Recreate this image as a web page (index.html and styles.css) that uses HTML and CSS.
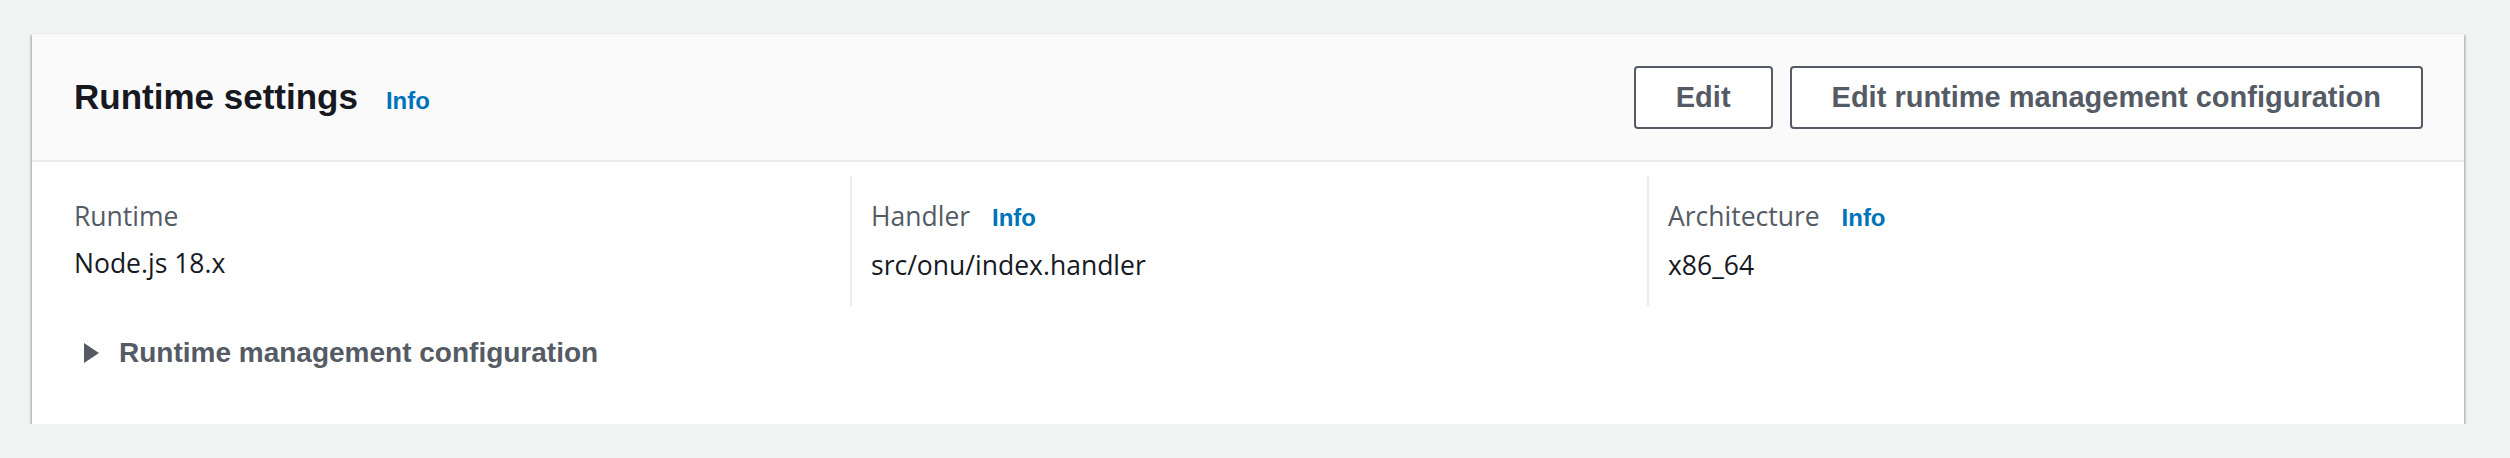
FILE: index.html
```html
<!DOCTYPE html>
<html lang="en">
<head>
<meta charset="utf-8">
<title>Runtime settings</title>
<link rel="stylesheet" href="styles.css">
</head>
<body>
<section class="card">
  <header class="card-header">
    <div class="title-group">
      <h2 class="title">Runtime settings</h2>
      <a class="info-link info-title" href="#">Info</a>
    </div>
    <div class="actions">
      <button class="btn btn-edit" type="button">Edit</button>
      <button class="btn" type="button">Edit runtime management configuration</button>
    </div>
  </header>
  <div class="card-body">
    <div class="columns">
      <div class="col">
        <div class="label">Runtime</div>
        <div class="value">Node.js 18.x</div>
      </div>
      <div class="col col-divided">
        <div class="label">Handler <a class="info-link" href="#">Info</a></div>
        <div class="value">src/onu/index.handler</div>
      </div>
      <div class="col col-divided">
        <div class="label">Architecture <a class="info-link" href="#">Info</a></div>
        <div class="value">x86_64</div>
      </div>
    </div>
    <div class="expander">
      <svg class="caret" width="15" height="20" viewBox="0 0 15 20" aria-hidden="true"><polygon points="0,0 15,10 0,20" fill="#545b64"/></svg>
      <span class="expander-text">Runtime management configuration</span>
    </div>
  </div>
</section>
</body>
</html>
```

FILE: styles.css
```css
* { box-sizing: border-box; }

html, body {
  margin: 0;
  background: #f2f3f3;
}

body {
  padding: 33px 46px 0 32px;
  font-family: "Open Sans", "Noto Sans", sans-serif;
  color: #16191f;
}

.card {
  background: #ffffff;
  box-shadow: 0 2px 2px 0 rgba(0, 28, 36, 0.35), 2px 2px 2px 0 rgba(0, 28, 36, 0.15), -2px 2px 2px 0 rgba(0, 28, 36, 0.15);
  border-top: 1px solid #eaeded;
}

.card-header {
  height: 128px;
  background: #fafafa;
  border-bottom: 2px solid #eaeded;
  padding: 0 41px 0 42px;
  display: flex;
  align-items: center;
  justify-content: space-between;
}

.title-group {
  display: flex;
  align-items: baseline;
  gap: 28px;
}

.title {
  margin: 0;
  font-family: "Liberation Sans", Arial, sans-serif;
  font-weight: 700;
  font-size: 35px;
  line-height: 40px;
  color: #16191f;
}

.info-link {
  font-family: "Liberation Sans", Arial, sans-serif;
  font-weight: 700;
  font-size: 24px;
  color: #0073bb;
  text-decoration: none;
  margin-left: 15px;
}

.info-title {
  margin-left: 0;
}

.actions {
  display: flex;
  gap: 17px;
}

.btn {
  height: 63px;
  padding: 0 40px;
  background: #ffffff;
  border: 2px solid #545b64;
  border-radius: 4px;
  font-family: "Liberation Sans", Arial, sans-serif;
  font-weight: 700;
  font-size: 29px;
  color: #545b64;
}

.card-body {
  padding: 14px 41px 51px 42px;
}

.columns {
  display: grid;
  grid-template-columns: repeat(3, 1fr);
  margin: 0 -21px;
}

.col {
  padding: 20px 21px 21px;
}

.col-divided {
  border-left: 2px solid #eaeded;
  padding-left: 19px;
}

.label {
  font-size: 26.5px;
  line-height: 40px;
  color: #545b64;
}

.value {
  margin-top: 7px;
  font-size: 26.5px;
  line-height: 40px;
  color: #16191f;
}

.expander {
  margin-top: 27px;
  display: flex;
  align-items: center;
  gap: 20px;
  padding-left: 10px;
  height: 40px;
}

.caret {
  display: block;
  flex: none;
}

.expander-text {
  font-family: "Liberation Sans", Arial, sans-serif;
  font-weight: 700;
  font-size: 28px;
  line-height: 40px;
  color: #545b64;
}
```
